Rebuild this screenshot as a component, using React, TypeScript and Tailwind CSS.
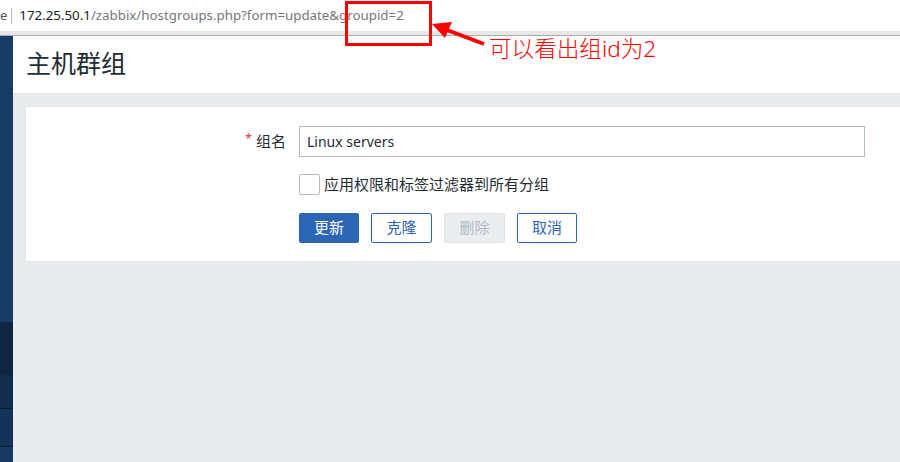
import React from "react";

const font = { fontFamily: '"Noto Sans", "Noto Sans CJK SC", sans-serif' };

export default function App() {
  return (
    <div className="relative w-[900px] h-[462px] overflow-hidden bg-[#e9ecef] flex flex-col" style={font}>
      {/* browser address bar */}
      <div className="h-[31px] bg-white flex items-center shrink-0">
        <span className="text-[13px] text-[#555] ml-0">e</span>
        <span className="w-px h-[16px] bg-[#bbb] ml-[4px] mr-[7px]" />
        <span className="text-[13.3px] text-[#222]">172.25.50.1</span>
        <span className="text-[13.3px] text-[#777]">/zabbix/hostgroups.php?form=update&amp;groupid=2</span>
      </div>
      <div className="h-[5px] bg-[#e8e8e6] border-b border-[#a9a9a7] shrink-0" />
      <div className="flex flex-1">
        {/* sidebar */}
        <div className="w-[13px] flex flex-col shrink-0">
          <div className="h-[286px] bg-[#173c66]" />
          <div className="h-[53px] bg-[#0f2640]" />
          <div className="h-[34px] bg-[#122c4c] border-b border-[#0a1a2e]" />
          <div className="h-[38px] bg-[#143258] border-b border-[#0a1a2e]" />
          <div className="flex-1 bg-[#173a62]" />
        </div>
        {/* main */}
        <div className="flex-1 flex flex-col">
          <div className="h-[58px] bg-white border-b border-[#dfe4e7] flex items-center pl-[13px]">
            <h1 className="text-[25px] text-[#1f2c33] font-normal leading-none mt-[-2px]">主机群组</h1>
          </div>
          <div className="pl-[12px] pt-[12px]">
            <div className="h-[156px] bg-white border border-[#dfe4e7] border-r-0 pt-[19px]">
              <div className="flex items-center h-[31px]">
                <div className="w-[273px] text-right pr-[13px] text-[15px] text-[#1f2c33]">
                  <span className="text-[#e33734] text-[12px] mr-[4px] align-top">*</span>组名
                </div>
                <div className="w-[566px] h-[31px] border border-[#acbbc2] flex items-center px-[7px] text-[14px] text-[#1f2c33]">
                  Linux servers
                </div>
              </div>
              <div className="flex items-center mt-[16px] ml-[273px]">
                <div className="w-[21px] h-[21px] border border-[#acbbc2] rounded-[2px] bg-white" />
                <span className="ml-[4px] text-[15px] text-[#1f2c33]">应用权限和标签过滤器到所有分组</span>
              </div>
              <div className="flex items-center mt-[17px] ml-[273px] gap-[12px]">
                <button className="w-[60px] h-[30px] rounded-[2px] bg-[#2b66b5] text-white text-[15px]">更新</button>
                <button className="w-[61px] h-[30px] rounded-[2px] border border-[#2b66b5] bg-white text-[#2b66b5] text-[15px]">克隆</button>
                <button className="w-[61px] h-[30px] rounded-[2px] border border-[#dfe4e7] bg-[#ebeef0] text-[#acbbc2] text-[15px]">删除</button>
                <button className="w-[60px] h-[30px] rounded-[2px] border border-[#2b66b5] bg-white text-[#2b66b5] text-[15px]">取消</button>
              </div>
            </div>
          </div>
        </div>
      </div>
      {/* annotation overlay */}
      <div className="absolute left-[345px] top-[1px] w-[87px] h-[45px] border-[3px] border-[#ff0000]" />
      <svg className="absolute left-0 top-0" width="900" height="462">
        <line x1="484" y1="44" x2="447" y2="30" stroke="#ff0000" strokeWidth="4" />
        <polygon points="432,24 452,22 445,38" fill="#ff0000" />
      </svg>
      <div className="absolute left-[489px] top-[38px] text-[22.6px] text-[#ff0000] leading-none font-light">可以看出组id为2</div>
    </div>
  );
}
